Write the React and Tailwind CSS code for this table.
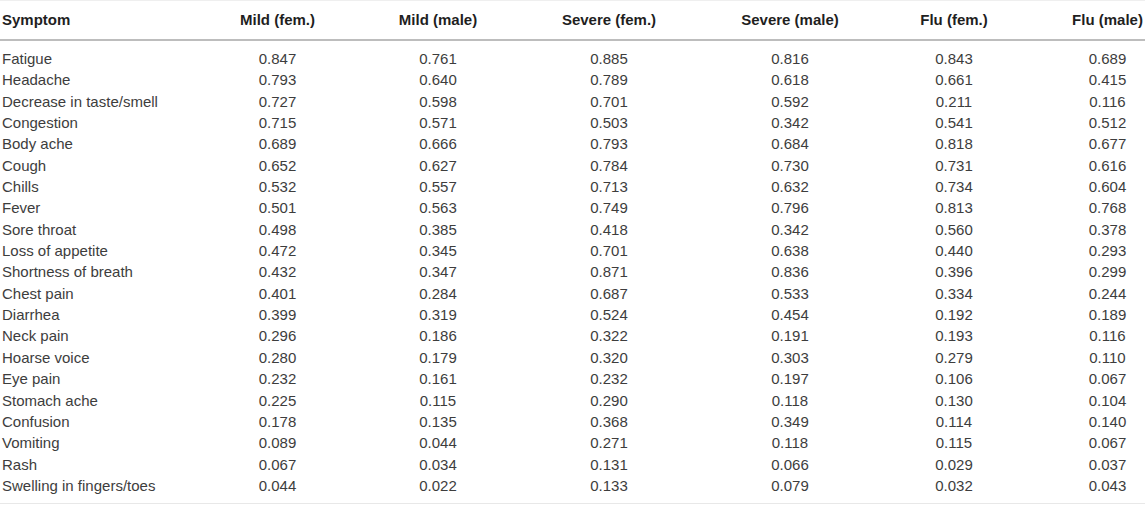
import React from "react";

const columns = ["Symptom", "Mild (fem.)", "Mild (male)", "Severe (fem.)", "Severe (male)", "Flu (fem.)", "Flu (male)"];

const rows = [
    ["Fatigue", "0.847", "0.761", "0.885", "0.816", "0.843", "0.689"],
    ["Headache", "0.793", "0.640", "0.789", "0.618", "0.661", "0.415"],
    ["Decrease in taste/smell", "0.727", "0.598", "0.701", "0.592", "0.211", "0.116"],
    ["Congestion", "0.715", "0.571", "0.503", "0.342", "0.541", "0.512"],
    ["Body ache", "0.689", "0.666", "0.793", "0.684", "0.818", "0.677"],
    ["Cough", "0.652", "0.627", "0.784", "0.730", "0.731", "0.616"],
    ["Chills", "0.532", "0.557", "0.713", "0.632", "0.734", "0.604"],
    ["Fever", "0.501", "0.563", "0.749", "0.796", "0.813", "0.768"],
    ["Sore throat", "0.498", "0.385", "0.418", "0.342", "0.560", "0.378"],
    ["Loss of appetite", "0.472", "0.345", "0.701", "0.638", "0.440", "0.293"],
    ["Shortness of breath", "0.432", "0.347", "0.871", "0.836", "0.396", "0.299"],
    ["Chest pain", "0.401", "0.284", "0.687", "0.533", "0.334", "0.244"],
    ["Diarrhea", "0.399", "0.319", "0.524", "0.454", "0.192", "0.189"],
    ["Neck pain", "0.296", "0.186", "0.322", "0.191", "0.193", "0.116"],
    ["Hoarse voice", "0.280", "0.179", "0.320", "0.303", "0.279", "0.110"],
    ["Eye pain", "0.232", "0.161", "0.232", "0.197", "0.106", "0.067"],
    ["Stomach ache", "0.225", "0.115", "0.290", "0.118", "0.130", "0.104"],
    ["Confusion", "0.178", "0.135", "0.368", "0.349", "0.114", "0.140"],
    ["Vomiting", "0.089", "0.044", "0.271", "0.118", "0.115", "0.067"],
    ["Rash", "0.067", "0.034", "0.131", "0.066", "0.029", "0.037"],
    ["Swelling in fingers/toes", "0.044", "0.022", "0.133", "0.079", "0.032", "0.043"],
];

// column widths picked so each centred column lands where the reference has it
const grid = "grid grid-cols-[155px_245px_76px_266px_96px_232px_75px]";

const Cell = ({ index, children }) => (
    index === 0
        ? <div className="pl-[2px] whitespace-nowrap">{children}</div>
        : <div className="flex justify-center whitespace-nowrap">{children}</div>
);

const App = () => {
    return (
        <div className="w-[1145px] h-[506px] bg-white overflow-hidden font-['Liberation_Sans',Arial,sans-serif] text-[15px]">
            <div className="border-t border-[#efefef]" />

            <div className={`${grid} h-[40px] items-center font-bold text-[#1f1f1f] border-b-2 border-[#bdbdbd]`}>
                {columns.map((col, i) => (
                    <Cell key={col} index={i}>{col}</Cell>
                ))}
            </div>

            <div className="pt-[7px] pb-[7px] text-[#3d3d3d] border-b border-[#e8e8e8]">
                {rows.map((row) => (
                    <div key={row[0]} className={`${grid} h-[21.35px] items-center leading-[21.35px]`}>
                        {row.map((value, i) => (
                            <Cell key={i} index={i}>{value}</Cell>
                        ))}
                    </div>
                ))}
            </div>
        </div>
    );
};

export default App;
